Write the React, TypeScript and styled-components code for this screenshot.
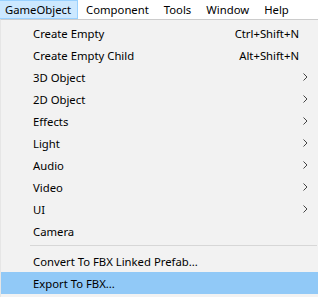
import styled, { createGlobalStyle } from 'styled-components';

const Global = createGlobalStyle`
    html, body {
        margin: 0;
        padding: 0;
        background: #ffffff;
    }
    body {
        font-family: "Noto Sans", "Liberation Sans", sans-serif;
        font-size: 11.3px;
        color: #000000;
    }
`

const Page = styled.div`
    width: 318px;
    height: 297px;
    overflow: hidden;
    display: flex;
    flex-direction: column;
`

const MenuBar = styled.div`
    display: flex;
    height: 19px;
    background: #ffffff;
`

const BarItem = styled.div<{ $open?: boolean }>`
    display: flex;
    align-items: center;
    padding: 0 6px 0 5px;
    margin-right: 3px;
    height: 19px;
    box-sizing: border-box;
    white-space: nowrap;
    background: ${p => (p.$open ? '#cce8ff' : 'transparent')};
    border: 1px solid ${p => (p.$open ? '#99d1ff' : 'transparent')};
    border-left-width: 0;
`

const Menu = styled.div`
    flex: 1;
    background: #f2f2f2;
    border-top: 1px solid #cccccc;
    border-left: 1px solid #e6e6e6;
    padding-top: 2px;
    display: flex;
    flex-direction: column;
`

const Row = styled.div<{ $active?: boolean }>`
    display: flex;
    align-items: center;
    height: 22px;
    flex-shrink: 0;
    padding: 0 10px 0 32px;
    background: ${p => (p.$active ? '#91c9f7' : 'transparent')};
`

const Label = styled.span`
    flex: 1;
`

const Shortcut = styled.span`
    margin-right: 9px;
`

const Separator = styled.div`
    height: 1px;
    flex-shrink: 0;
    background: #d7d7d7;
    margin: 3px 1px 4px 29px;
`

function Chevron() {
    return (
        <svg width="5" height="8" viewBox="0 0 5 8">
            <path d="M0.5 0.5 L4 4 L0.5 7.5" fill="none" stroke="#444" strokeWidth="1" />
        </svg>
    )
}

const items: { label: string, shortcut?: string, sub?: boolean }[] = [
    { label: 'Create Empty', shortcut: 'Ctrl+Shift+N' },
    { label: 'Create Empty Child', shortcut: 'Alt+Shift+N' },
    { label: '3D Object', sub: true },
    { label: '2D Object', sub: true },
    { label: 'Effects', sub: true },
    { label: 'Light', sub: true },
    { label: 'Audio', sub: true },
    { label: 'Video', sub: true },
    { label: 'UI', sub: true },
    { label: 'Camera' },
]

export default function App() {
    return (
        <Page>
            <Global />
            <MenuBar>
                <BarItem $open>GameObject</BarItem>
                <BarItem>Component</BarItem>
                <BarItem>Tools</BarItem>
                <BarItem>Window</BarItem>
                <BarItem>Help</BarItem>
            </MenuBar>
            <Menu>
                {items.map(item => (
                    <Row key={item.label}>
                        <Label>{item.label}</Label>
                        {item.shortcut && <Shortcut>{item.shortcut}</Shortcut>}
                        {item.sub && <Chevron />}
                    </Row>
                ))}
                <Separator />
                <Row>
                    <Label>Convert To FBX Linked Prefab...</Label>
                </Row>
                <Row $active>
                    <Label>Export To FBX...</Label>
                </Row>
            </Menu>
        </Page>
    )
}
